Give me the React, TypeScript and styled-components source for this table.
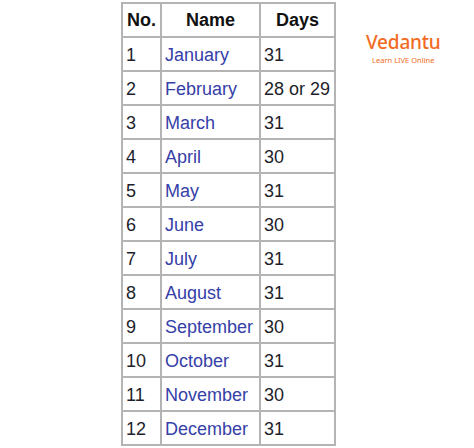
import styled, { createGlobalStyle } from "styled-components";

const GlobalStyle = createGlobalStyle`
  html, body {
    margin: 0;
    padding: 0;
    background: #ffffff;
  }
`;

const Page = styled.div`
  width: 474px;
  height: 448px;
  display: flex;
  align-items: flex-start;
  padding: 2px 0 0 121px;
  box-sizing: border-box;
  font-family: Arial, "Liberation Sans", sans-serif;
`;

const Table = styled.table`
  border-collapse: collapse;
  border: 2px solid #b4b4b4;
  font-size: 18px;
  color: #1e1e2a;
`;

const HeadCell = styled.th<{ $w: number }>`
  width: ${(p) => p.$w}px;
  height: 34px;
  padding: 0;
  border: 2px solid #b4b4b4;
  font-weight: bold;
  text-align: center;
  color: #111;
  box-sizing: border-box;
`;

const Cell = styled.td<{ $link?: boolean }>`
  height: 34px;
  padding: 2px 0 0 3px;
  border: 2px solid #b4b4b4;
  text-align: left;
  color: ${(p) => (p.$link ? "#3540a8" : "#1e1e2a")};
  white-space: nowrap;
  box-sizing: border-box;
`;

const Logo = styled.div`
  display: flex;
  flex-direction: column;
  align-items: center;
  margin: 29px 0 0 30px;
  color: #f26b22;
`;

const Brand = styled.div`
  font-family: "Noto Sans", sans-serif;
  font-size: 19px;
  font-weight: 500;
  letter-spacing: -0.2px;
  line-height: 22px;
`;

const Tagline = styled.div`
  font-family: "Noto Sans", sans-serif;
  font-size: 7.5px;
  line-height: 9px;
  margin-top: 3px;
`;

const months: [string, string][] = [
  ["January", "31"],
  ["February", "28 or 29"],
  ["March", "31"],
  ["April", "30"],
  ["May", "31"],
  ["June", "30"],
  ["July", "31"],
  ["August", "31"],
  ["September", "30"],
  ["October", "31"],
  ["November", "30"],
  ["December", "31"],
];

export default function App() {
  return (
    <>
      <GlobalStyle />
      <Page>
        <Table>
          <thead>
            <tr>
              <HeadCell $w={39}>No.</HeadCell>
              <HeadCell $w={99}>Name</HeadCell>
              <HeadCell $w={75}>Days</HeadCell>
            </tr>
          </thead>
          <tbody>
            {months.map(([name, days], i) => (
              <tr key={name}>
                <Cell>{i + 1}</Cell>
                <Cell $link>{name}</Cell>
                <Cell>{days}</Cell>
              </tr>
            ))}
          </tbody>
        </Table>
        <Logo>
          <Brand>Vedantu</Brand>
          <Tagline>Learn LIVE Online</Tagline>
        </Logo>
      </Page>
    </>
  );
}
